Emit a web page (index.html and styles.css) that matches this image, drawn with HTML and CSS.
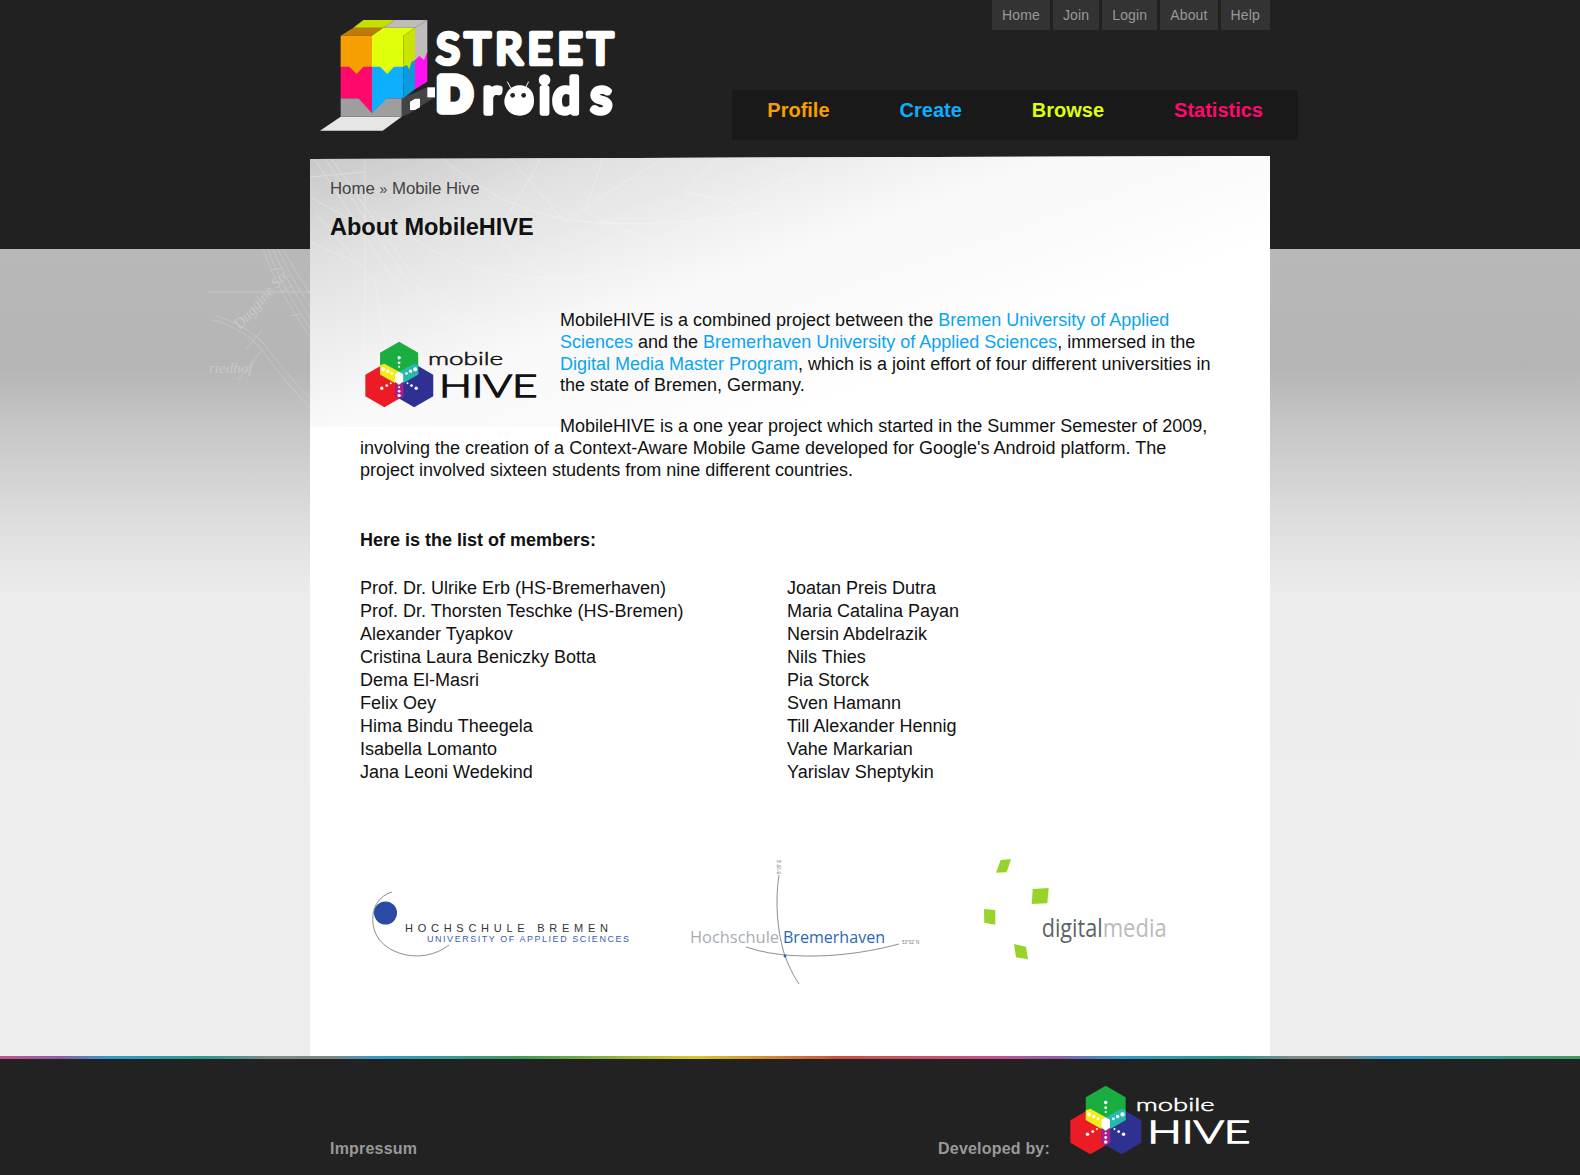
FILE: index.html
```html
<!DOCTYPE html>
<html lang="en">
<head>
    <meta charset="UTF-8">
    <title>About MobileHIVE</title>
    <link rel="stylesheet" href="styles.css">
</head>
<body>
    <svg class="defs" width="0" height="0">
        <symbol id="hive" viewBox="0 0 520 200">
            <polygon fill="#ed1c24" points="58,68 115,101 115,165 58,198 1,165 1,101"/>
            <polygon fill="#2e3192" points="147,68 204,101 204,165 147,198 90,165 90,101"/>
            <polygon fill="#1aad3f" points="102,2 159,35 159,100 102,133 45,100 45,35"/>
            <polygon fill="#f7e81c" points="45,72 58,68 102,92 102,133 45,100"/>
            <polygon fill="#27b9b0" points="159,72 147,68 102,92 102,133 159,100"/>
            <polygon fill="#a6208e" points="90,120 102,133 115,120 115,165 102,172 90,165"/>
            <polygon fill="#fff" points="102,92 114,99 114,122 102,129 90,122 90,99"/>
            <g fill="#fff">
                <circle cx="102" cy="50" r="5"/><circle cx="102" cy="65" r="4"/><circle cx="102" cy="77" r="3"/>
                <circle cx="54" cy="84" r="6"/><circle cx="68" cy="90" r="5"/><circle cx="80" cy="97" r="4"/>
                <circle cx="150" cy="84" r="6"/><circle cx="136" cy="90" r="5"/><circle cx="124" cy="97" r="4"/>
                <circle cx="50" cy="141" r="5"/><circle cx="65" cy="133" r="4"/><circle cx="77" cy="126" r="3"/>
                <circle cx="153" cy="141" r="5"/><circle cx="139" cy="133" r="4"/><circle cx="127" cy="126" r="3"/>
                <circle cx="102" cy="163" r="5"/><circle cx="102" cy="150" r="4"/><circle cx="102" cy="138" r="3"/>
            </g>
            <text class="hive-small" x="188" y="73" textLength="225" lengthAdjust="spacingAndGlyphs">mobile</text>
            <text class="hive-big" x="221" y="166" textLength="294" lengthAdjust="spacingAndGlyphs">HIVE</text>
        </symbol>
    </svg>

    <div class="top-band"></div>

    <div class="wrapper">
        <!-- faint street map beside the page top -->
        <svg class="texture" width="105" height="178" viewBox="205 249 105 178">
            <g fill="none" stroke="#fff" stroke-width=".8">
                <path d="M263 249 C272 275 285 300 310 337"/>
                <path d="M268 249 C277 275 290 298 310 328"/>
                <path d="M273 249 C282 272 295 293 310 318"/>
                <path d="M278 249 C287 270 298 288 310 306"/>
                <path d="M283 249 C292 266 302 280 310 294"/>
                <path d="M208 292 H310"/>
                <path d="M213 320 C235 326 252 338 262 350 C276 370 294 392 310 407"/>
                <path d="M216 316 C238 322 255 334 266 346 C280 366 298 386 310 398"/>
                <path d="M246 350 L262 330 M238 380 L262 350"/>
                <path d="M270 270 L284 268 M280 292 L292 286 M290 316 L300 314"/>
            </g>
            <text class="map-text" transform="translate(240 330) rotate(-48)">Duggine Str.</text>
            <text class="map-text" x="209" y="373">riedhof</text>
        </svg>
        <div class="header">
            <svg class="logo" width="340" height="150" viewBox="0 0 1020 450">
                <polygon fill="#e6e6e6" points="60,392 122,350 305,350 248,392"/>
                <polygon fill="#444" points="305,350 305,295 382,262 405,262 405,292 330,340"/>
                <polygon fill="#fff" points="330,305 345,296 360,296 360,322 345,330 330,330"/>
                <polygon fill="#fff" points="382,262 405,262 405,292 382,292"/>
                <polygon fill="#9e9e9e" points="122,295 305,295 305,350 122,350"/>
                <polygon fill="#bd7a08" points="122,107 160,83 250,83 216,107"/>
                <polygon fill="#c5e000" points="160,83 190,60 285,60 250,83"/>
                <polygon fill="#c0bcbc" points="285,60 382,60 345,83 250,83"/>
                <polygon fill="#ff0a6c" points="122,195 216,195 216,340 175,295 122,295"/>
                <polygon fill="#0daeff" points="216,195 310,195 310,295 262,295 216,340"/>
                <polygon fill="#0b9ade" points="310,190 345,170 345,268 310,295"/>
                <polygon fill="#ff10f0" points="345,165 382,150 382,245 345,268"/>
                <polygon fill="#f59f00" points="122,107 216,107 216,200 190,200 170,222 148,200 122,200"/>
                <polygon fill="#dfff0b" points="216,107 250,83 345,83 310,107 310,200 282,200 262,222 240,200 216,200"/>
                <polygon fill="#c8e400" points="310,107 345,83 345,180 335,185 328,208 320,195 310,200"/>
                <polygon fill="#c0bcbc" points="345,83 382,60 382,155 372,180 358,168 345,180"/>
                <text class="logo-text" x="409" y="193" textLength="530">STREET</text>
                <text class="logo-text logo-d" x="412" y="331">D</text>
                <text class="logo-text droids" y="338" x="548 618 716 758 872">roids</text>
                <g stroke="#fff" stroke-width="3">
                    <line x1="622" y1="245" x2="632" y2="264"/>
                    <line x1="686" y1="245" x2="676" y2="264"/>
                </g>
                <circle cx="654" cy="304" r="41" fill="#fff"/>
                <circle cx="638" cy="286" r="7" fill="#222"/>
                <circle cx="671" cy="286" r="7" fill="#222"/>
            </svg>
            <div class="nav-area">
                <div class="top-nav">
                    <a href="#">Home</a>
                    <a href="#">Join</a>
                    <a href="#">Login</a>
                    <a href="#">About</a>
                    <a href="#">Help</a>
                </div>
                <div class="main-nav">
                    <a class="orange" href="#">Profile</a>
                    <a class="blue" href="#">Create</a>
                    <a class="lime" href="#">Browse</a>
                    <a class="pink" href="#">Statistics</a>
                </div>
            </div>
        </div>

        <div class="content">
            <div class="content-head">
                <svg class="texture-inner" width="600" height="271" viewBox="105 4 600 271">
                    <g fill="none" stroke="#fff" stroke-width=".8">
                        <path d="M105 0 L190 130 L300 210"/>
                        <path d="M112 -5 L200 125 L310 205"/>
                        <path d="M118 -5 L206 120 L316 200"/>
                        <path d="M160 0 V275"/>
                        <path d="M170 60 C260 130 330 140 470 110"/>
                        <path d="M230 0 C300 60 360 90 560 60"/>
                        <path d="M300 0 L360 70 L420 30 L470 0"/>
                        <path d="M180 200 C260 170 320 170 400 150"/>
                        <path d="M340 0 L290 85 L350 130"/>
                        <path d="M520 0 L480 40 L530 50"/>
                        <path d="M110 60 L170 130 L190 250"/>
                        <path d="M400 0 L380 60 L450 90 L600 20"/>
                        <path d="M105 25 L160 20 M105 45 L150 70 M105 90 L150 110"/>
                    </g>
                </svg>
                <div class="breadcrumb"><a href="#">Home</a> <span class="raquo">»</span> <a href="#">Mobile Hive</a></div>
                <h1>About MobileHIVE</h1>
            </div>
            <div class="article">
                <svg class="article-logo"><use href="#hive"/></svg>
                <p class="first">MobileHIVE is a combined project between the <a href="#">Bremen University of Applied Sciences</a> and the <a href="#">Bremerhaven University of Applied Sciences</a>, immersed in the <a href="#">Digital Media Master Program</a>, which is a joint effort of four different universities in the state of Bremen, Germany.</p>
                <p>MobileHIVE is a one year project which started in the Summer Semester of 2009, involving the creation of a Context-Aware Mobile Game developed for Google's Android platform. The project involved sixteen students from nine different countries.</p>
                <h2>Here is the list of members:</h2>
                <div class="members">
                    <ul>
                        <li>Prof. Dr. Ulrike Erb (HS-Bremerhaven)</li>
                        <li>Prof. Dr. Thorsten Teschke (HS-Bremen)</li>
                        <li>Alexander Tyapkov</li>
                        <li>Cristina Laura Beniczky Botta</li>
                        <li>Dema El-Masri</li>
                        <li>Felix Oey</li>
                        <li>Hima Bindu Theegela</li>
                        <li>Isabella Lomanto</li>
                        <li>Jana Leoni Wedekind</li>
                    </ul>
                    <ul>
                        <li>Joatan Preis Dutra</li>
                        <li>Maria Catalina Payan</li>
                        <li>Nersin Abdelrazik</li>
                        <li>Nils Thies</li>
                        <li>Pia Storck</li>
                        <li>Sven Hamann</li>
                        <li>Till Alexander Hennig</li>
                        <li>Vahe Markarian</li>
                        <li>Yarislav Sheptykin</li>
                    </ul>
                </div>
                <div class="partners">
                    <svg width="275" height="135" viewBox="365 855 275 135">
                        <path class="thin" d="M392 892 C375 897 369 915 375 932 C383 954 422 966 449 945"/>
                        <circle cx="385.500" cy="913" r="11.500" fill="#2a4ba5"/>
                        <text class="hsb-name" x="405" y="932" textLength="203">HOCHSCHULE BREMEN</text>
                        <text class="hsb-sub" x="427" y="942" textLength="202">UNIVERSITY OF APPLIED SCIENCES</text>
                    </svg>
                    <svg width="250" height="135" viewBox="685 855 250 135">
                        <path class="thin" d="M779 875 C775 900 777 930 784 953 C788 965 793 975 799 984"/>
                        <path class="thin" d="M746 947 C775 957 810 957 836 955 C860 953 880 949 899 944"/>
                        <text class="hsbhv grey" x="690" y="943" textLength="89" lengthAdjust="spacingAndGlyphs">Hochschule</text>
                        <text class="hsbhv bluetext" x="783" y="943" textLength="102" lengthAdjust="spacingAndGlyphs">Bremerhaven</text>
                        <circle cx="785" cy="956" r="1.500" fill="#2a66b5"/>
                        <text class="tiny" transform="translate(781 874) rotate(-90)">8°35' E</text>
                        <text class="tiny" x="902" y="944">53°32' N</text>
                    </svg>
                    <svg width="200" height="135" viewBox="980 855 200 135">
                        <polygon fill="#97d42a" points="1000.700,860 1011,859 1006.700,872.300 996,872.700"/>
                        <polygon fill="#97d42a" points="1032.700,889 1048.700,888 1047.300,903.300 1031.700,904"/>
                        <polygon fill="#97d42a" points="984,909 995.300,910 995.300,924.700 984.300,922.700"/>
                        <polygon fill="#97d42a" points="1014,944 1026,946.700 1028,959.300 1016,957.300"/>
                        <text class="dm dark" x="1041.700" y="937" textLength="61" lengthAdjust="spacingAndGlyphs">digital</text>
                        <text class="dm light" x="1102.700" y="937" textLength="64" lengthAdjust="spacingAndGlyphs">media</text>
                    </svg>
                </div>
            </div>
        </div>
    </div>

    <div class="rainbow"></div>
    <div class="footer">
        <div class="footer-inner">
            <a href="#">Impressum</a>
            <div class="developed">
                <span>Developed by:</span>
                <svg class="footer-logo"><use href="#hive"/></svg>
            </div>
        </div>
    </div>
</body>
</html>
```

FILE: styles.css
```css
html, body {
    margin: 0;
    padding: 0;
}
body {
    font-family: "Liberation Sans", Arial, sans-serif;
    position: relative;
    background: linear-gradient(to bottom, #b8b8b8 249px, #b5b5b5 367px, #c8c8c8 433px, #dedede 525px, #ededed 600px, #eeeeee 100%);
    color: #111;
    overflow-x: hidden;
}
a {
    text-decoration: none;
}
.defs {
    position: absolute;
}
.top-band {
    position: absolute;
    top: 0;
    left: 0;
    right: 0;
    height: 249px;
    background: #212121;
}
.wrapper {
    position: relative;
    width: 960px;
    margin: 0 auto;
}
.texture {
    position: absolute;
    top: 249px;
    left: -105px;
    opacity: .25;
}
.map-text {
    font-family: "Liberation Serif", serif;
    font-style: italic;
    font-size: 15px;
    fill: #fff;
}
.header {
    position: relative;
    display: flex;
    justify-content: space-between;
    height: 156px;
}
.logo {
    margin-left: -10px;
}
.nav-area {
    display: flex;
    flex-direction: column;
    align-items: flex-end;
}
.top-nav {
    display: flex;
    gap: 3px;
}
.top-nav a {
    background: #333;
    color: #999;
    font-size: 14px;
    letter-spacing: .15px;
    line-height: 30px;
    padding: 0 10px;
}
.main-nav {
    display: flex;
    gap: 70px;
    margin: 60px -28px 0 0;
    padding: 0 35px;
    height: 50px;
    background: #191919;
}
.main-nav a {
    font-size: 20px;
    font-weight: bold;
    line-height: 40px;
}
.orange { color: #f59f00; }
.blue { color: #0daeff; }
.lime { color: #dfff0b; }
.pink { color: #ff0a6c; }

.content {
    position: relative;
    background: #fff;
    height: 900px;
    clip-path: polygon(0 3px, 100% 0, 100% 100%, 0 100%);
}
.content-head {
    position: relative;
    background: linear-gradient(160deg, #c8c8c8 0%, #e0e0e0 17%, #ededed 31%, #f9f9f9 44%, #fafafa 56%, #fff 70%);
    height: 271px;
    margin-bottom: -271px;
    padding: 0 20px;
    box-sizing: border-box;
    overflow: hidden;
}
.texture-inner {
    position: absolute;
    top: 0;
    left: 0;
    opacity: .35;
}
.breadcrumb {
    position: relative;
    padding-top: 23px;
    font-size: 16.800px;
    line-height: 20px;
    color: #444;
}
.breadcrumb a {
    color: #444;
}
.raquo {
    font-size: 14px;
}
h1 {
    position: relative;
    margin: 13px 0 0;
    font-size: 23.500px;
    line-height: 30px;
    color: #111;
}
.article {
    position: relative;
    padding: 154px 50px 0;
    font-size: 18px;
    line-height: 21.75px;
}
.article-logo {
    float: left;
    width: 174px;
    height: 67px;
    margin: 31px 21px 14px 5px;
    color: #111;
}
.article p {
    margin: 0 0 21.750px;
}
.article p.first {
    margin-bottom: 19px;
}
.article p a {
    color: #0aa5ee;
}
.article h2 {
    clear: both;
    margin: 46.500px 0 0;
    font-size: 18px;
    line-height: 24px;
}
.members {
    display: flex;
    margin-top: 25px;
}
.members ul {
    list-style: none;
    margin: 0;
    padding: 0;
    width: 427px;
    line-height: 23px;
}
.partners {
    display: flex;
    gap: 45px;
    margin: 71px 0 0 5px;
}
.partners svg {
    flex: none;
}
.partners svg:nth-child(2) {
    margin-right: -45px;
}
.partners svg:nth-child(3) {
    margin-left: 45px;
}

.hive-small {
    font-family: "Lato", sans-serif;
    font-weight: 300;
    font-size: 50px;
    fill: currentColor;
    stroke: currentColor;
    stroke-width: 1.500;
}
.hive-big {
    font-family: "Lato", sans-serif;
    font-weight: 300;
    font-size: 92px;
    fill: currentColor;
    stroke: currentColor;
    stroke-width: 4;
}
.logo-text {
    font-family: "Lato", sans-serif;
    font-size: 130px;
    fill: #fff;
    stroke: #fff;
    stroke-width: 14;
    stroke-linejoin: round;
    stroke-linecap: round;
}
.droids {
    font-size: 145px;
    stroke-width: 16;
}
.logo-d {
    font-size: 135px;
    stroke-width: 28;
}
.thin {
    fill: none;
    stroke: #6d7080;
    stroke-width: 0.800;
}
.hsb-name {
    font-size: 11px;
    fill: #333;
}
.hsb-sub {
    font-size: 9px;
    fill: #3a5cb5;
}
.hsbhv {
    font-family: "Open Sans", sans-serif;
    font-size: 17px;
}
.grey { fill: #a9acb5; }
.bluetext { fill: #2a66b5; }
.tiny {
    font-size: 4.500px;
    fill: #777;
}
.dm {
    font-family: "Open Sans", sans-serif;
    font-weight: 400;
    font-size: 26px;
}
.dark { fill: #5a6468; }
.light { fill: #bbb; }

.rainbow {
    height: 3px;
    background: linear-gradient(to right, #c8508c 0%, #8a5fa8 4%, #2f9ccc 7%, #2a9a8a 13%, #7d8a8a 17%, #7a8888 21%, #2f9ccc 24%, #3f9a5a 33%, #d8c828 44%, #cc5040 53%, #c8508c 63%, #8a5fa8 67%, #2f9ccc 71%, #2a9a8a 78%, #7d8a8a 82%, #7a8888 85%, #2f9ccc 88%, #3f9a5a 100%);
}
.footer {
    background: #222;
    height: 116px;
}
.footer-inner {
    width: 920px;
    margin: 0 auto;
    display: flex;
    justify-content: space-between;
    align-items: flex-end;
    height: 100%;
}
.footer-inner a,
.developed span {
    color: #999;
    font-size: 16px;
    font-weight: bold;
    letter-spacing: .2px;
    line-height: 52px;
}
.developed {
    display: flex;
    align-items: flex-end;
    gap: 20px;
}
.footer-logo {
    width: 182px;
    height: 70px;
    margin: 0 -2px 20px 0;
    color: #fff;
}
```
